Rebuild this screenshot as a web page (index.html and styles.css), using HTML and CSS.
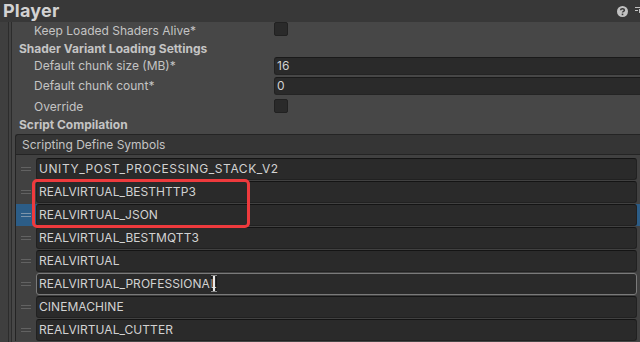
FILE: index.html
```html
<!DOCTYPE html>
<html>
<head>
<meta charset="utf-8">
<link rel="stylesheet" href="styles.css">
</head>
<body>
<div class="titlebar">
  <span class="title">Player</span>
  <div class="title-icons">
    <svg class="help" width="11" height="11" viewBox="0 0 11 11"><circle cx="5.5" cy="5.5" r="5.5" fill="#c2c2c2"/><path d="M3.6 4.2 C3.6 2.4 7.4 2.4 7.4 4.2 C7.4 5.4 5.5 5.3 5.5 6.6" stroke="#383838" stroke-width="1.5" fill="none"/><rect x="4.7" y="7.6" width="1.6" height="1.6" fill="#383838"/></svg>
    <svg class="preset" width="8" height="10" viewBox="0 0 8 10"><rect x="0" y="1" width="8" height="1" fill="#c2c2c2"/><rect x="0" y="4" width="3" height="1" fill="#c2c2c2"/><rect x="4" y="3" width="4" height="4" fill="#c2c2c2"/></svg>
  </div>
</div>
<div class="main">
  <div class="gutter"></div>
  <div class="content">
    <div class="row r-keep"><span class="label sub">Keep Loaded Shaders Alive*</span><span class="check"></span></div>
    <div class="row r-head"><span class="label head">Shader Variant Loading Settings</span></div>
    <div class="row r-field"><span class="label sub">Default chunk size (MB)*</span><span class="field">16</span></div>
    <div class="row r-field"><span class="label sub">Default chunk count*</span><span class="field">0</span></div>
    <div class="row r-override"><span class="label sub">Override</span><span class="check"></span></div>
    <div class="row r-head2"><span class="label head">Script Compilation</span></div>
    <div class="listbox">
      <div class="list-header">Scripting Define Symbols</div>
      <div class="list-body">
        <div class="item"><span class="handle"></span><span class="ifield wide">UNITY_POST_PROCESSING_STACK_V2</span></div>
        <div class="item"><span class="handle"></span><span class="ifield">REALVIRTUAL_BESTHTTP3</span></div>
        <div class="item selected"><span class="handle"></span><span class="ifield">REALVIRTUAL_JSON</span></div>
        <div class="item"><span class="handle"></span><span class="ifield">REALVIRTUAL_BESTMQTT3</span></div>
        <div class="item"><span class="handle"></span><span class="ifield">REALVIRTUAL</span></div>
        <div class="item"><span class="handle"></span><span class="ifield focused">REALVIRTUAL_PROFESSIONAL<span class="ibeam"></span></span></div>
        <div class="item"><span class="handle"></span><span class="ifield">CINEMACHINE</span></div>
        <div class="item"><span class="handle"></span><span class="ifield">REALVIRTUAL_CUTTER</span></div>
        <div class="redbox"></div>
      </div>
    </div>
  </div>
</div>
</body>
</html>
```

FILE: styles.css
```css
* { box-sizing: border-box; }
html, body { margin: 0; padding: 0; }
body {
  width: 640px;
  height: 342px;
  overflow: hidden;
  background: #474747;
  font-family: Inter, "Noto Sans", sans-serif;
  font-size: 12px;
  color: #c4c4c4;
}
.titlebar {
  height: 22px;
  background: #383838;
  display: flex;
  align-items: center;
  justify-content: space-between;
}
.title {
  font-weight: 700;
  font-size: 18px;
  color: #d2d2d2;
  padding-left: 3px;
  line-height: 20px;
  letter-spacing: 0.2px;
}
.title-icons {
  display: flex;
  align-items: center;
  gap: 7px;
  margin-right: -3px;
}
.help { display: block; }
.preset { display: block; }
.main {
  display: flex;
  height: 320px;
}
.gutter {
  width: 12px;
  flex: none;
  background: linear-gradient(to right, #3f3f3f 0, #3f3f3f 8px, #2c2c2c 8px, #2c2c2c 9px, #424242 9px, #424242 11px, #2c2c2c 11px, #2c2c2c 12px);
}
.content {
  flex: 1;
  display: flex;
  flex-direction: column;
  min-width: 0;
}
.row {
  display: grid;
  grid-template-columns: 262px 1fr;
  align-items: center;
}
.label.sub { padding-left: 22px; }
.label.head { padding-left: 7px; font-weight: 700; }
.r-keep { height: 17px; }
.r-head { height: 18px; }
.r-field { height: 20px; align-items: start; }
.r-field .label { line-height: 18px; }
.r-override { height: 18px; }
.r-head2 { height: 19px; }
.check {
  width: 14px;
  height: 14px;
  background: #2a2a2a;
  border: 1px solid #212121;
  border-radius: 2px;
}
.r-keep .check { align-self: start; margin-top: 0; }
.field {
  height: 18px;
  background: #2a2a2a;
  border-top: 1px solid #1a1a1a;
  border-bottom: 1px solid #242424;
  border-left: 1px solid #212121;
  border-radius: 3px 0 0 3px;
  color: #d2d2d2;
  padding-left: 2px;
  line-height: 16px;
}
.listbox {
  margin-left: 3px;
  display: flex;
  flex-direction: column;
}
.list-header {
  height: 21px;
  background: #353535;
  border: 1px solid #242424;
  border-right: none;
  border-radius: 3px 0 0 0;
  padding-left: 6px;
  line-height: 19px;
}
.list-body {
  position: relative;
  background: #414141;
  border-left: 1px solid #242424;
  padding-top: 3px;
  display: flex;
  flex-direction: column;
  gap: 1px;
}
.item {
  height: 22px;
  display: flex;
  align-items: center;
}
.item.selected { background: #2c5d87; }
.handle {
  width: 20px;
  flex: none;
  height: 4px;
  background: linear-gradient(#626262, #626262) 5px 0 / 10px 1px no-repeat,
              linear-gradient(#626262, #626262) 5px 3px / 10px 1px no-repeat;
}
.selected .handle {
  background: linear-gradient(#7d95ab, #7d95ab) 5px 0 / 10px 1px no-repeat,
              linear-gradient(#7d95ab, #7d95ab) 5px 3px / 10px 1px no-repeat;
}
.ifield {
  position: relative;
  flex: 1;
  height: 22px;
  margin-right: 3px;
  background: #2a2a2a;
  border: 1px solid #212121;
  border-top-color: #141414;
  border-radius: 3px;
  color: #d2d2d2;
  padding-left: 2px;
  line-height: 20px;
  letter-spacing: 0.05px;
}
.ifield.wide { letter-spacing: 0.57px; }
.ifield.focused { border-color: #7a7a7a; }
.ibeam {
  position: absolute;
  left: 174px;
  top: 1px;
  width: 6px;
  height: 17px;
  border-top: 1px solid #e8e8e8;
  border-bottom: 1px solid #e8e8e8;
  background: linear-gradient(#e8e8e8, #e8e8e8) 2px 0 / 2px 100% no-repeat;
  outline: 1px solid rgba(0,0,0,0.4);
  outline-offset: -1px;
}
.redbox {
  position: absolute;
  left: 16px;
  top: 24px;
  width: 218px;
  height: 49px;
  border: 3px solid #ee3a3d;
  border-radius: 5px;
}
```
